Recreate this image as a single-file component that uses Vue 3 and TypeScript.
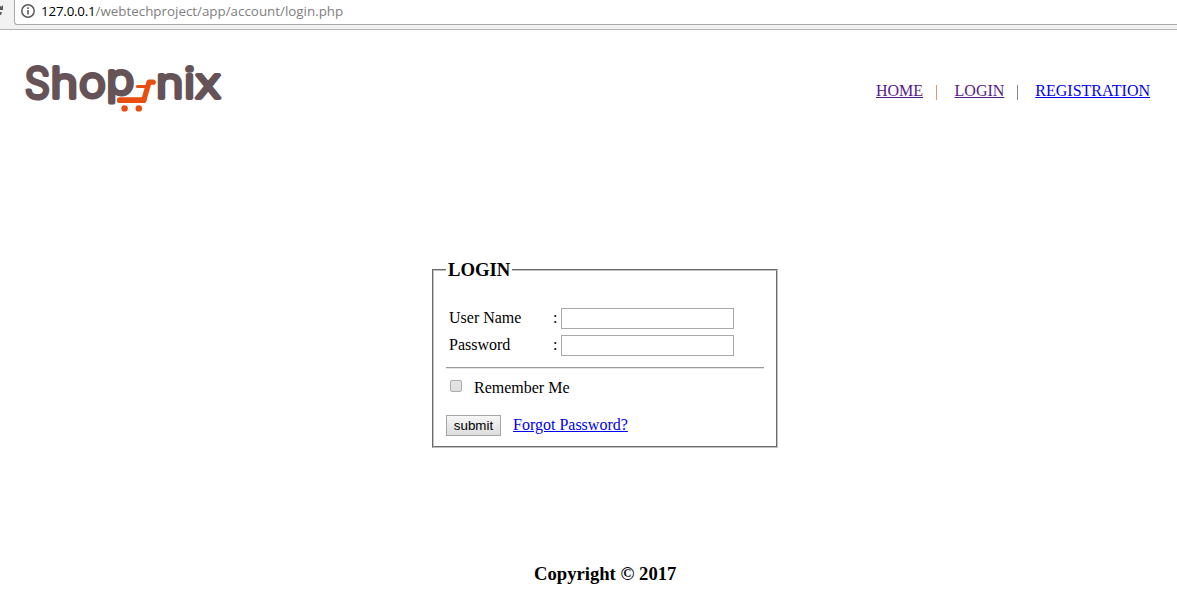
<script setup lang="ts">
import { ref } from 'vue'

interface Letter { char: string; x: number; y: number; width: number }

const letters: Letter[] = [
  { char: 'S', x: 0.8, y: 36.6, width: 25.2 },
  { char: 'h', x: 26.4, y: 36.6, width: 27.6 },
  { char: 'o', x: 55, y: 36.2, width: 26.8 },
  { char: 'p', x: 82.3, y: 33.2, width: 28 },
  { char: 'n', x: 132, y: 36.6, width: 27.6 },
  { char: 'i', x: 160, y: 36.6, width: 11 },
  { char: 'x', x: 171.2, y: 36.6, width: 25.6 },
]
const username = ref('')
const password = ref('')
const remember = ref(false)
</script>

<template>
  <div class="page">
    <div class="toolbar">
      <svg class="reload" width="14" height="24" viewBox="0 0 14 24">
        <path d="M-3 6.5Q0 6.5 1.3 8" fill="none" stroke="#5a5a5a" stroke-width="2" />
        <path d="M3 5v5h-5z M-3 12h5q0 3-3 4h-2z" fill="#5a5a5a" />
      </svg>
      <div class="address">
        <svg class="info" width="14" height="14" viewBox="0 0 14 14">
          <circle cx="7" cy="7" r="6.2" fill="none" stroke="#5a5a5a" stroke-width="1.5" />
          <path d="M7 6v4.5M7 3.3v1.6" stroke="#5a5a5a" stroke-width="1.6" />
        </svg>
        <span class="url"><span class="host">127.0.0.1</span>/webtechproject/app/account/login.php</span>
      </div>
    </div>
    <header class="header">
      <svg class="logo" width="204" height="72" viewBox="0 -10 204 72">
        <text
          v-for="letter in letters"
          :key="letter.char"
          class="wordmark"
          :x="letter.x"
          :y="letter.y"
          :textLength="letter.width"
          lengthAdjust="spacingAndGlyphs"
        >{{ letter.char }}</text>
        <g fill="none" stroke="#e84e0f" stroke-linecap="round" stroke-linejoin="round">
          <path d="M95.8 39.2H119.5" stroke-width="5.8" />
          <path d="M120 38.5L125 21.2H129.2" stroke-width="5.2" />
          <path d="M113.5 25.5H123" stroke-width="3.2" />
        </g>
        <circle cx="100.6" cy="47.4" r="3.2" fill="#e84e0f" />
        <circle cx="114.8" cy="47.4" r="3.2" fill="#e84e0f" />
      </svg>
      <nav class="nav">
        <a class="visited" href="#">HOME</a>
        <span class="divider warm"></span>
        <a class="visited" href="#">LOGIN</a>
        <span class="divider cool"></span>
        <a href="#">REGISTRATION</a>
      </nav>
    </header>
    <main>
      <form class="panel" @submit.prevent>
        <h1>LOGIN</h1>
        <div class="field">
          <label for="username">User Name</label><span>:</span>
          <input id="username" v-model="username" class="textbox" type="text">
        </div>
        <div class="field">
          <label for="password">Password</label><span>:</span>
          <input id="password" v-model="password" class="textbox" type="password">
        </div>
        <div class="rule"></div>
        <label class="remember"><input v-model="remember" class="check" type="checkbox">Remember Me</label>
        <div class="actions">
          <button type="submit">submit</button>
          <a href="#">Forgot Password?</a>
        </div>
      </form>
    </main>
    <footer>Copyright © 2017</footer>
  </div>
</template>

<style>
body { margin: 0; background: #fff; overflow: hidden; }
</style>

<style scoped>
* { box-sizing: border-box; }
.page { width: 1177px; height: 601px; overflow: hidden; display: flex; flex-direction: column; font: 16px/18px "Liberation Serif", serif; color: #000; }
.toolbar { height: 30px; flex: none; background: #f2f2f2; border-bottom: 1px solid #b5b5b5; display: flex; align-items: flex-start; }
.reload { flex: none; }
.address { flex: 1; height: 25px; background: #fff; border: solid #a9a9a9; border-width: 0 0 1px 1px; border-bottom-left-radius: 3px; display: flex; padding-left: 6px; }
.info { margin-top: 4px; flex: none; }
.url { margin-left: 6px; font: 13.37px/22px "Open Sans", sans-serif; color: #808080; white-space: nowrap; }
.host { color: #000; letter-spacing: -0.2px; }
.header { height: 90px; flex: none; display: flex; justify-content: space-between; align-items: flex-start; padding: 21px 27px 0 24px; }
.wordmark { font: 300 42px Inter, sans-serif; fill: #655357; stroke: #655357; stroke-width: 3.8px; stroke-linejoin: round; }
.nav { display: flex; align-items: center; margin-top: 31px; }
a { color: #0000ee; text-decoration: underline; }
a.visited { color: #551a8b; }
.divider { width: 1px; height: 15px; margin: 2px 17px 0 13px; }
.warm { background: #d89778; }
.cool { background: #8b8592; }
.nav .warm { margin-right: 17.5px; }
main { padding: 149px 0 0 432px; }
.panel { width: 346px; height: 179px; border: 2px groove #c0c0c0; padding: 0 12px; }
h1 { width: max-content; margin: -12px 0 27px; padding: 0 2px; background: #fff; font-size: 18.72px; line-height: 22px; }
.field { height: 21px; display: flex; align-items: center; margin-bottom: 6px; padding-left: 3px; }
.field label { width: 104px; margin-top: -2px; }
.field span { width: 8px; margin-top: -2px; }
.textbox { width: 173px; height: 21px; border: 1px solid #a9a9a9; padding: 1px; background: #fff; outline: 0; }
.rule { height: 2px; margin-top: 11px; border-top: 1px solid #9a9a9a; border-bottom: 1px solid #e4e4e4; }
.remember { display: flex; height: 18px; margin-top: 10px; padding-left: 4px; }
.check { appearance: none; width: 12px; height: 12px; margin: 1px 12px 0 0; border: 1px solid #acacac; border-radius: 2px; background: linear-gradient(#e3e3e3, #dedede); }
.actions { display: flex; align-items: flex-start; margin-top: 18px; }
button { width: 55px; height: 21px; padding: 0; border: 1px solid #a6a6a6; border-radius: 0; background: linear-gradient(#f6f6f6, #dcdcdc); color: #000; font: 13.333px/17px "Liberation Sans", Arial, sans-serif; }
.actions a { margin: 1px 0 0 12px; }
footer { margin: 115px 0 0 534px; font-size: 18.65px; line-height: 22px; font-weight: bold; }
</style>
